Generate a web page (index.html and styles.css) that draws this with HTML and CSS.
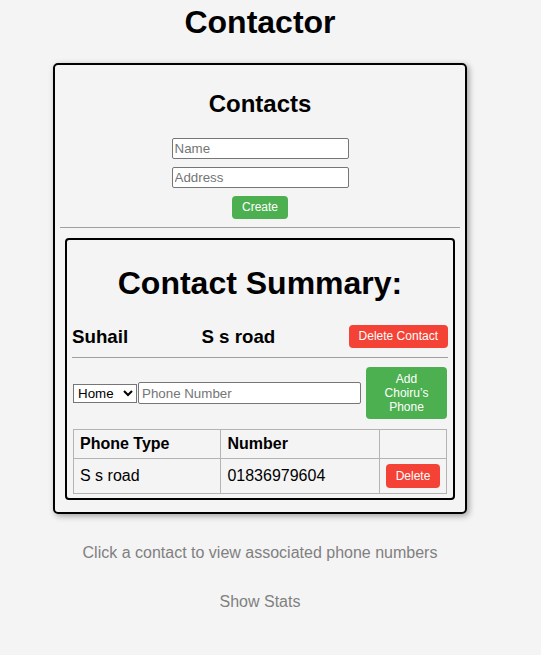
FILE: index.html
```html
<!DOCTYPE html>
<html>
<head>
<meta charset="utf-8">
<link rel="stylesheet" href="styles.css">
</head>
<body>
<div class="app">
  <h1 class="title">Contactor</h1>
  <div class="card">
    <h2 class="card-title">Contacts</h2>
    <div class="form">
      <input class="field" type="text" placeholder="Name">
      <input class="field" type="text" placeholder="Address">
      <button class="btn btn-green btn-create">Create</button>
    </div>
    <hr class="rule">
    <div class="summary">
      <h1 class="summary-title">Contact Summary:</h1>
      <div class="contact-row">
        <h3 class="contact-text">Suhail</h3>
        <h3 class="contact-text">S s road</h3>
        <button class="btn btn-red">Delete Contact</button>
      </div>
      <hr class="rule">
      <div class="add-row">
        <select class="type-select">
          <option>Home</option>
          <option>Work</option>
          <option>Mobile</option>
        </select>
        <input class="phone-field" type="text" placeholder="Phone Number">
        <button class="btn btn-green btn-add">Add Choiru’s Phone</button>
      </div>
      <table class="phones">
        <colgroup>
          <col class="c1"><col class="c2"><col class="c3">
        </colgroup>
        <thead>
          <tr><th>Phone Type</th><th>Number</th><th></th></tr>
        </thead>
        <tbody>
          <tr>
            <td>S s road</td>
            <td>01836979604</td>
            <td class="act"><button class="btn btn-red btn-del">Delete</button></td>
          </tr>
        </tbody>
      </table>
    </div>
  </div>
  <p class="hint">Click a contact to view associated phone numbers</p>
  <p class="stats">Show Stats</p>
</div>
</body>
</html>
```
FILE: styles.css
```css
html, body {
  margin: 0;
  padding: 0;
  background: #f4f4f4;
}
body {
  font-family: "Liberation Sans", Arial, sans-serif;
  color: #000;
}
.app {
  width: 520px;
  text-align: center;
}
.title {
  font-size: 32px;
  font-weight: bold;
  margin: 4px 0 22px;
  line-height: 37px;
}
.card {
  box-sizing: border-box;
  width: 414px;
  margin: 0 auto;
  border: 2px solid #000;
  border-radius: 5px;
  padding: 5px 5px 5px;
  box-shadow: 2px 2px 6px rgba(0, 0, 0, 0.35);
}
.card-title {
  font-size: 24px;
  margin: 20px 0 20px;
  line-height: 28px;
}
.form {
  display: flex;
  flex-direction: column;
  align-items: center;
  gap: 8px;
}
.field {
  box-sizing: border-box;
  width: 177px;
  height: 21px;
  border: 1px solid #767676;
  border-radius: 2px;
  padding: 1px 2px;
  font: 13.33px "Liberation Sans", Arial, sans-serif;
  background: #fff;
}
.field::placeholder, .phone-field::placeholder {
  color: #757575;
}
.btn {
  border: none;
  color: #fff;
  font: 12px "Liberation Sans", Arial, sans-serif;
  border-radius: 4px;
  cursor: pointer;
}
.btn-green { background: #4caf50; }
.btn-red {
  background: #f44336;
  line-height: 15px;
  padding: 4px 10px;
}
.btn-create {
  line-height: 15px;
  padding: 4px 10px;
  width: 56px;
}
.rule {
  border: none;
  border-top: 1px solid #a0a0a0;
  margin: 8px 0 10px;
  height: 0;
}
.summary {
  border: 2px solid #000;
  border-radius: 4px;
  margin: 0 5px 7px;
  padding: 5px 6px 4px;
}
.summary-title {
  font-size: 32px;
  line-height: 37px;
  margin: 20px 0 23px;
}
.contact-row {
  display: flex;
  justify-content: space-between;
  align-items: center;
  height: 23px;
  margin: 0 -1px;
}
.contact-text {
  margin: 0;
  font-size: 18.72px;
  line-height: 22px;
}
.summary .rule {
  margin: 9px -1px 9px;
}
.add-row {
  display: flex;
  align-items: center;
  margin-bottom: 10px;
}
.type-select {
  box-sizing: border-box;
  width: 64px;
  height: 19px;
  font: 13.33px "Liberation Sans", Arial, sans-serif;
  border: 1px solid #767676;
  border-radius: 0;
  background: #fff;
  color: #000;
  padding: 0;
  margin-right: 1px;
}
.phone-field {
  box-sizing: border-box;
  width: 223px;
  height: 22px;
  border: 1px solid #767676;
  border-radius: 2px;
  padding: 1px 3px;
  font: 13.33px "Liberation Sans", Arial, sans-serif;
  background: #fff;
}
.btn-add {
  width: 81px;
  margin-left: auto;
  line-height: 14px;
  padding: 5px 12px;
}
.phones {
  width: 374px;
  border-collapse: collapse;
  text-align: left;
  font-size: 16px;
  margin: 0;
}
.c1 { width: 148px; }
.c2 { width: 159px; }
.c3 { width: 67px; }
.phones th, .phones td {
  border: 1px solid #b4b4b4;
  padding: 5px 6px;
  line-height: 18px;
}
.phones th { font-weight: bold; }
.phones td.act {
  text-align: center;
  padding: 5px 0;
}
.btn-del {
  line-height: 14px;
  padding: 5px 10px;
}
.hint {
  color: #808080;
  font-size: 16px;
  margin: 30px 0 0;
  line-height: 18px;
}
.stats {
  color: #808080;
  font-size: 16px;
  margin: 31px 0 0;
  line-height: 18px;
}
```
